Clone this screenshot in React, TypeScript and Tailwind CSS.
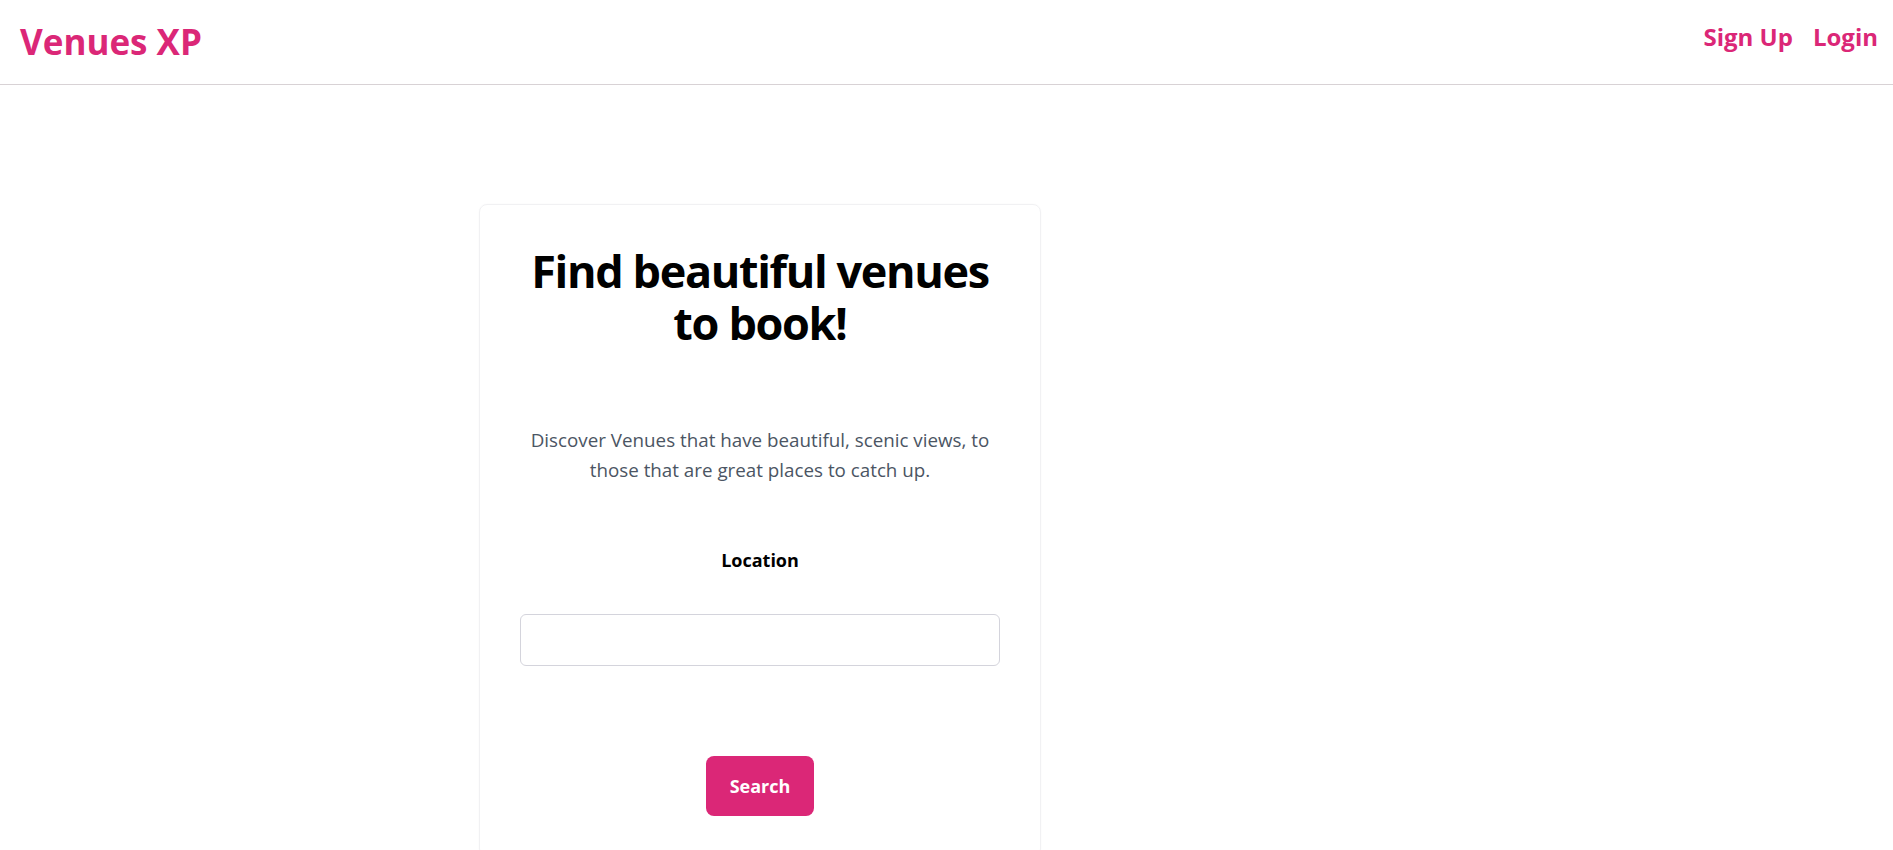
export default function App() {
  return (
    <div className="min-h-screen bg-white font-['Open_Sans',sans-serif] text-black">
      {/* Header */}
      <header className="flex h-[85px] items-center justify-between border-b border-[#d8d2d5] pl-5 pr-[15px]">
        <a href="#" className="text-[35px] font-bold text-[#db2777]">
          Venues XP
        </a>
        <nav className="mb-[10px] flex items-center gap-5 text-[24px] font-bold text-[#db2777]">
          <a href="#">Sign Up</a>
          <a href="#">Login</a>
        </nav>
      </header>

      {/* Search card */}
      <main className="mx-auto mt-[119px] max-w-[935px]">
        <div className="w-[562px] rounded-lg border border-[#f1f1f3] px-10 pt-10 pb-10 text-center shadow-[0_0_2px_rgba(0,0,0,0.03)]">
          <h1 className="text-[45px] leading-[52px] font-bold tracking-[-0.03em]">
            Find beautiful venues to book!
          </h1>
          <p className="mt-[76px] text-[18.8px] leading-[30px] text-[#4b5563]">
            Discover Venues that have beautiful, scenic views, to those that
            are great places to catch up.
          </p>
          <label
            htmlFor="location"
            className="mt-[61px] block text-lg leading-7 font-bold"
          >
            Location
          </label>
          <input
            id="location"
            type="text"
            className="mt-10 block h-[52px] w-full rounded-md border border-[#d4d4dc] px-3 outline-none"
          />
          <button className="mt-[90px] rounded-lg bg-[#db2777] px-6 py-4 text-lg leading-7 font-bold text-white">
            Search
          </button>
        </div>
      </main>
    </div>
  );
}
